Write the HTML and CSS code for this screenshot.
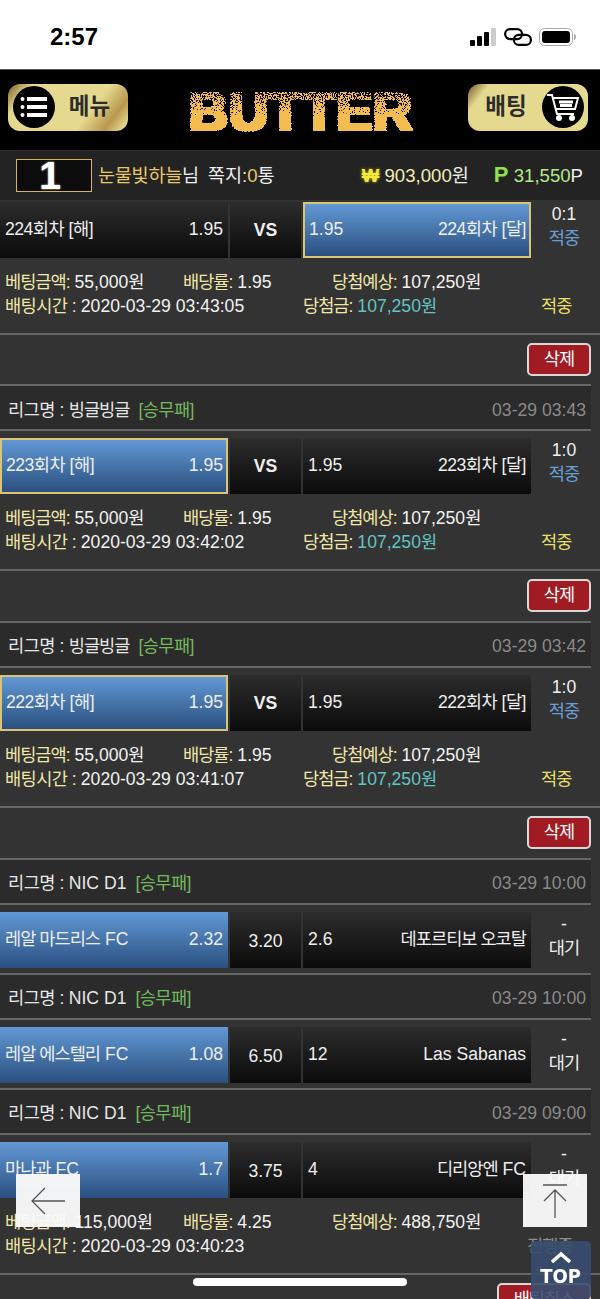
FILE: index.html
```html
<!DOCTYPE html>
<html lang="ko">
<head>
  <meta charset="UTF-8" />
  <meta name="viewport" content="width=device-width, initial-scale=1.0" />
  <title>BUTTER</title>
  <link rel="stylesheet" href="styles.css">
</head>
<body>
  <svg class="defs" width="0" height="0" aria-hidden="true">
    <filter id="speckle" x="-2%" y="-2%" width="104%" height="104%" color-interpolation-filters="sRGB">
      <feMorphology in="SourceGraphic" operator="dilate" radius="1.5 0.7" result="fat" />
      <feComponentTransfer in="fat" result="solid">
        <feFuncA type="linear" slope="30" intercept="0" />
      </feComponentTransfer>
      <feTurbulence type="fractalNoise" baseFrequency="0.9" numOctaves="2" seed="4" result="noise" />
      <feColorMatrix in="noise" type="matrix" values="0 0 0 0 0  0 0 0 0 0  0 0 0 0 0  2.2 0 0 0 -0.6" result="grain" />
      <feComposite in="fat" in2="grain" operator="arithmetic" k1="0" k2="1" k3="1" k4="-0.8" result="sum" />
      <feComponentTransfer in="sum" result="mask">
        <feFuncA type="linear" slope="30" intercept="0" />
      </feComponentTransfer>
      <feComposite in="mask" in2="solid" operator="in" result="dots" />
      <feFlood flood-color="#f2bc50" />
      <feComposite in2="dots" operator="in" />
    </filter>
  </svg>

  <div class="status-bar">
    <span class="clock">2:57</span>
    <div class="status-icons">
      <svg width="27" height="18" viewBox="0 0 27 18">
        <rect x="0" y="12" width="5" height="6" rx="1" fill="#000" />
        <rect x="7" y="8" width="5" height="10" rx="1" fill="#000" />
        <rect x="14" y="4" width="5" height="14" rx="1" fill="#000" />
        <rect x="21" y="0" width="5" height="18" rx="1" fill="#ccc" />
      </svg>
      <svg width="28" height="18" viewBox="0 0 28 18" fill="none" stroke="#000" stroke-width="2.2">
        <rect x="1.100" y="1.100" width="17" height="10" rx="5" />
        <rect x="9.900" y="6.900" width="17" height="10" rx="5" />
      </svg>
      <svg width="37" height="18" viewBox="0 0 37 18">
        <rect x="0.5" y="0.5" width="33" height="17" rx="5" fill="none" stroke="#a8a8a8" />
        <rect x="3" y="3" width="28" height="12" rx="3" fill="#000" />
        <path d="M35 6c1.4.4 2 1.500 2 3s-.6 2.600-2 3z" fill="#a8a8a8" />
      </svg>
    </div>
  </div>

  <header class="top-header">
    <a class="gold-btn">
      <span class="round-icon">
        <svg width="28" height="24" viewBox="0 0 28 24" fill="#fff">
          <circle cx="2.500" cy="4" r="2" /><rect x="7" y="2" width="20" height="4" />
          <circle cx="2.500" cy="12" r="2" /><rect x="7" y="10" width="20" height="4" />
          <circle cx="2.500" cy="20" r="2" /><rect x="7" y="18" width="20" height="4" />
        </svg>
      </span>
      <span class="gold-label">메뉴</span>
    </a>
    <h1 class="logo">BUTTER</h1>
    <a class="gold-btn gold-btn-right">
      <span class="gold-label">배팅</span>
      <span class="round-icon">
        <svg width="34" height="30" viewBox="0 0 34 30" fill="none" stroke="#fff" stroke-width="2">
          <path d="M1 3h5l5 19h17" />
          <path d="M7 6h25l-3 11H10" />
          <path d="M13 10h14M14 13.500h12" stroke-width="3" />
          <circle cx="13" cy="26" r="2" fill="#fff" />
          <circle cx="26" cy="26" r="2" fill="#fff" />
        </svg>
      </span>
    </a>
  </header>

  <div class="user-bar">
    <span class="rank-badge">1</span>
    <span class="user-name"><span class="gold">눈물빛하늘</span>님</span>
    <span class="user-msg">쪽지:<span class="gold">0</span>통</span>
    <span class="user-money"><b class="won-mark">₩</b> <span class="pale">903,000</span>원</span>
    <span class="user-point"><b class="point-mark">P</b> <span class="light-green">31,550</span>P</span>
  </div>

  <main class="bet-list">
    <section class="bet first">
      <div class="match">
        <div class="team"><span class="round">224회차 [해]</span><span>1.95</span></div>
        <div class="mid vs">VS</div>
        <div class="team picked selected"><span>1.95</span><span class="round">224회차 [달]</span></div>
        <div class="result">0:1<br><span class="hit-blue ko">적중</span></div>
      </div>
      <div class="info">
        <div class="info-line">
          <span class="col-a"><em>베팅금액:</em> 55,000원</span>
          <span class="col-b"><em>배당률:</em> 1.95</span>
          <span><em>당첨예상:</em> 107,250원</span>
        </div>
        <div class="info-line">
          <span class="col-c"><em>배팅시간 :</em> 2020-03-29 03:43:05</span>
          <span class="col-d"><em>당첨금:</em> <span class="win-money">107,250원</span></span>
          <span class="state-hit ko">적중</span>
        </div>
      </div>
      <div class="tools"><a class="red-btn ko">삭제</a></div>
    </section>

    <section class="bet">
      <div class="league">
        <span><span class="ko">리그명 :</span> <span class="league-ko">빙글빙글</span><span class="kind">[승무패]</span></span>
        <span class="league-time">03-29 03:43</span>
      </div>
      <div class="match">
        <div class="team picked selected"><span class="round">223회차 [해]</span><span>1.95</span></div>
        <div class="mid vs">VS</div>
        <div class="team"><span>1.95</span><span class="round">223회차 [달]</span></div>
        <div class="result">1:0<br><span class="hit-blue ko">적중</span></div>
      </div>
      <div class="info">
        <div class="info-line">
          <span class="col-a"><em>베팅금액:</em> 55,000원</span>
          <span class="col-b"><em>배당률:</em> 1.95</span>
          <span><em>당첨예상:</em> 107,250원</span>
        </div>
        <div class="info-line">
          <span class="col-c"><em>배팅시간 :</em> 2020-03-29 03:42:02</span>
          <span class="col-d"><em>당첨금:</em> <span class="win-money">107,250원</span></span>
          <span class="state-hit ko">적중</span>
        </div>
      </div>
      <div class="tools"><a class="red-btn ko">삭제</a></div>
    </section>

    <section class="bet">
      <div class="league">
        <span><span class="ko">리그명 :</span> <span class="league-ko">빙글빙글</span><span class="kind">[승무패]</span></span>
        <span class="league-time">03-29 03:42</span>
      </div>
      <div class="match">
        <div class="team picked selected"><span class="round">222회차 [해]</span><span>1.95</span></div>
        <div class="mid vs">VS</div>
        <div class="team"><span>1.95</span><span class="round">222회차 [달]</span></div>
        <div class="result">1:0<br><span class="hit-blue ko">적중</span></div>
      </div>
      <div class="info">
        <div class="info-line">
          <span class="col-a"><em>베팅금액:</em> 55,000원</span>
          <span class="col-b"><em>배당률:</em> 1.95</span>
          <span><em>당첨예상:</em> 107,250원</span>
        </div>
        <div class="info-line">
          <span class="col-c"><em>배팅시간 :</em> 2020-03-29 03:41:07</span>
          <span class="col-d"><em>당첨금:</em> <span class="win-money">107,250원</span></span>
          <span class="state-hit ko">적중</span>
        </div>
      </div>
      <div class="tools"><a class="red-btn ko">삭제</a></div>
    </section>

    <section class="bet">
      <div class="league">
        <span><span class="ko">리그명 :</span> NIC D1<span class="kind">[승무패]</span></span>
        <span class="league-time">03-29 10:00</span>
      </div>
      <div class="match">
        <div class="team picked"><span><span class="ko">레알 마드리스</span> FC</span><span>2.32</span></div>
        <div class="mid">3.20</div>
        <div class="team"><span>2.6</span><span class="ko">데포르티보 오코탈</span></div>
        <div class="result">-<br><span class="ko">대기</span></div>
      </div>
    </section>

    <section class="bet">
      <div class="league">
        <span><span class="ko">리그명 :</span> NIC D1<span class="kind">[승무패]</span></span>
        <span class="league-time">03-29 10:00</span>
      </div>
      <div class="match">
        <div class="team picked"><span><span class="ko">레알 에스텔리</span> FC</span><span>1.08</span></div>
        <div class="mid">6.50</div>
        <div class="team"><span>12</span><span>Las Sabanas</span></div>
        <div class="result">-<br><span class="ko">대기</span></div>
      </div>
    </section>

    <section class="bet">
      <div class="league">
        <span><span class="ko">리그명 :</span> NIC D1<span class="kind">[승무패]</span></span>
        <span class="league-time">03-29 09:00</span>
      </div>
      <div class="match">
        <div class="team picked"><span><span class="ko">마나과</span> FC</span><span>1.7</span></div>
        <div class="mid">3.75</div>
        <div class="team"><span>4</span><span><span class="ko">디리앙엔</span> FC</span></div>
        <div class="result">-<br><span class="ko">대기</span></div>
      </div>
      <div class="info">
        <div class="info-line">
          <span class="col-a"><em>베팅금액:</em> 115,000원</span>
          <span class="col-b"><em>배당률:</em> 4.25</span>
          <span><em>당첨예상:</em> 488,750원</span>
        </div>
        <div class="info-line">
          <span class="col-c"><em>배팅시간 :</em> 2020-03-29 03:40:23</span>
          <span class="col-d"></span>
          <span class="state-wait ko">진행중</span>
        </div>
      </div>
      <div class="tools"><a class="red-btn ko cancel-btn">배팅취소</a></div>
    </section>
  </main>

  <!-- browser toolbar buttons and floating top link sit over the list -->
  <a class="float-btn float-back">
    <svg width="36" height="30" viewBox="0 0 36 30" fill="none" stroke="#555" stroke-width="1.300">
      <path d="M35 15H2M15 2L2 15l13 13" />
    </svg>
  </a>
  <a class="float-btn float-up">
    <svg width="26" height="34" viewBox="0 0 26 34" fill="none" stroke="#555" stroke-width="1.300">
      <path d="M1 1h24M13 34V6M2 17L13 6l11 11" />
    </svg>
  </a>
  <a class="top-link">
    <svg width="20" height="12" viewBox="0 0 20 12" fill="none" stroke="#fff" stroke-width="3.500">
      <path d="M1 11l9-8 9 8" />
    </svg>
    <span>TOP</span>
  </a>
  <div class="home-bar"></div>
</body>
</html>
```

FILE: styles.css
```css
html, body {
  height: 1299px;
  overflow: hidden;
}
body {
  position: relative;
  margin: 0;
  background: #333;
  color: #eee;
  font-family: "Liberation Sans", "Noto Sans CJK KR", sans-serif;
  font-size: 17.6px;
  line-height: 24px;
}
a {
  text-decoration: none;
}
em {
  font-style: normal;
  color: #f0e6a8;
  letter-spacing: -1px;
}
.ko {
  letter-spacing: -1px;
}
.round {
  letter-spacing: -0.5px;
}
.defs {
  position: absolute;
}
.gold {
  color: #e8c766;
}
.pale {
  color: #f3edb5;
}
.light-green {
  color: #b6e88a;
}

/* status bar */
.status-bar {
  display: flex;
  justify-content: space-between;
  align-items: center;
  height: 70px;
  padding: 4px 24px 0 50px;
  box-sizing: border-box;
  background: #fff;
  border-bottom: 1px solid #555;
}
.clock {
  color: #000;
  font-size: 24px;
  font-weight: bold;
}
.status-icons {
  display: flex;
  align-items: center;
  gap: 7px;
}
.status-icons svg {
  display: block;
}

/* header */
.top-header {
  display: flex;
  justify-content: space-between;
  align-items: center;
  height: 80px;
  padding: 0 12px 6px 8px;
  box-sizing: border-box;
  background: #000;
}
.gold-btn {
  display: flex;
  align-items: center;
  justify-content: space-between;
  width: 120px;
  height: 47px;
  padding: 0 4px 0 5px;
  box-sizing: border-box;
  border-radius: 12px;
  background: linear-gradient(128deg, #7a5a2a 0%, #e4d98e 16%, #e4d98e 66%, #b9984e 84%, #e6da90 96%);
}
.gold-btn-right {
  background: linear-gradient(128deg, #6f5228 0%, #e4d98e 14%, #e4d98e 100%);
}
.round-icon {
  display: flex;
  align-items: center;
  justify-content: center;
  flex: none;
  width: 42px;
  height: 42px;
  border-radius: 50%;
  background: #000;
}
.gold-label {
  flex: 1;
  text-align: center;
  color: #2c2c2c;
  font-size: 22.5px;
  font-weight: bold;
}
.gold-btn-right .gold-label {
  padding-right: 3px;
}
.logo {
  margin: 8px 0 0 6px;
  font-size: 54px;
  line-height: 46px;
  font-weight: bold;
  letter-spacing: 0.8px;
  color: transparent;
  background: linear-gradient(180deg, rgba(0,0,0,0.3) 14%, rgba(0,0,0,0.55) 45%, #000 72%);
  -webkit-background-clip: text;
  background-clip: text;
  filter: url(#speckle);
}

/* user bar */
.user-bar {
  display: flex;
  align-items: center;
  height: 50px;
  padding: 0 17px 0 16px;
  box-sizing: border-box;
  background: #232323;
  border-top: 1px solid #2c2c2c;
  font-size: 18.6px;
}
.rank-badge {
  width: 76px;
  height: 33px;
  margin-right: 6px;
  padding-right: 8px;
  box-sizing: border-box;
  border: 1px solid #d9b45a;
  background: #0c0c0c;
  color: #fff;
  font-size: 39px;
  line-height: 31px;
  font-weight: bold;
  text-align: center;
  text-shadow: 0 0 2px #fff;
}
.user-name {
  letter-spacing: -0.3px;
}
.user-msg {
  margin-left: 9px;
}
.user-money {
  margin-left: auto;
}
.won-mark {
  color: #f2ea3c;
  text-shadow: 0 0 3px #c8b020;
}
.user-point {
  margin-left: 25px;
}
.point-mark {
  color: #8fe04e;
  font-size: 22px;
}

/* bet list */
.bet-list {
  display: flex;
  flex-direction: column;
}
.bet.first .match {
  margin-top: 1.8px;
}
.league {
  display: flex;
  justify-content: space-between;
  align-items: center;
  width: 591px;
  height: 47px;
  padding: 4px 5px 0 8px;
  box-sizing: border-box;
  background: #2b2b2b;
  border-top: 2px solid #666;
  border-bottom: 2px solid #666;
  color: #e6e6e6;
}
.league .ko {
  letter-spacing: -0.5px;
}
.league-ko {
  letter-spacing: -1px;
}
.kind {
  margin-left: 9px;
  color: #74b85e;
  letter-spacing: -0.6px;
}
.league-time {
  color: #8a8a8a;
}
.match {
  display: flex;
  height: 56px;
  margin: 7px 0 5px;
}
.team {
  display: flex;
  justify-content: space-between;
  align-items: center;
  width: 228px;
  padding: 0 5px 2px;
  box-sizing: border-box;
  background: linear-gradient(180deg, #2c2c2c, #0b0b0b);
  color: #eee;
}
.team.picked {
  background: linear-gradient(180deg, #6298d4, #2a5080);
}
.team.selected {
  border: 2px solid #dcc477;
  padding: 0 3px 2px 4px;
}
.mid {
  display: flex;
  justify-content: center;
  align-items: center;
  width: 71px;
  margin: 0 2px;
  padding-top: 2px;
  box-sizing: border-box;
  background: linear-gradient(180deg, #2c2c2c, #0b0b0b);
  color: #eee;
}
.mid.vs {
  padding-top: 0;
  font-weight: bold;
}
.result {
  flex: 1;
  padding-right: 3px;
  text-align: center;
  color: #eee;
}
.hit-blue {
  color: #6a9ed6;
}
.info {
  height: 70px;
  margin-top: -5px;
  padding: 12px 5px 0;
  box-sizing: border-box;
}
.info-line {
  display: flex;
  color: #f2f2f2;
}
.col-a {
  width: 178px;
}
.col-b {
  width: 149px;
}
.col-c {
  width: 298px;
}
.col-c em {
  letter-spacing: -0.6px;
}
.col-d {
  width: 238px;
}
.state-hit {
  color: #e8df6a;
}
.state-wait {
  margin-left: -14px;
  color: #8e8e8e;
}
.win-money {
  color: #62c4c0;
}
.tools {
  display: flex;
  justify-content: flex-end;
  height: 51.6px;
  padding: 8px 9px 0 0;
  box-sizing: border-box;
  border-top: 2px solid #666;
  margin-top: 5px;
}
.red-btn {
  display: block;
  width: 64px;
  height: 33px;
  box-sizing: border-box;
  border: 2px solid #d8d8d8;
  border-radius: 5px;
  background: #a01c22;
  color: #fff;
  line-height: 28px;
  text-align: center;
}
.cancel-btn {
  width: 94px;
}

/* floating bits */
.float-btn {
  position: absolute;
  top: 1174px;
  display: flex;
  align-items: center;
  justify-content: center;
  width: 64px;
  height: 53px;
  background: rgba(250, 250, 250, 0.96);
}
.float-back {
  left: 16px;
}
.float-up {
  left: 523px;
}
.top-link {
  position: absolute;
  left: 531px;
  top: 1241px;
  display: flex;
  flex-direction: column;
  align-items: center;
  width: 60px;
  height: 58px;
  padding-top: 10px;
  box-sizing: border-box;
  border-radius: 4px;
  background: rgba(56, 76, 112, 0.9);
  color: #fff;
  font-family: "DejaVu Sans", sans-serif;
  font-size: 20px;
  font-weight: bold;
}
.top-link svg {
  display: block;
}
.top-link span {
  margin-top: 1px;
  transform: scaleX(0.9);
}
.home-bar {
  position: absolute;
  left: 193px;
  top: 1278px;
  width: 214px;
  height: 8px;
  border-radius: 4px;
  background: #fff;
}
```
